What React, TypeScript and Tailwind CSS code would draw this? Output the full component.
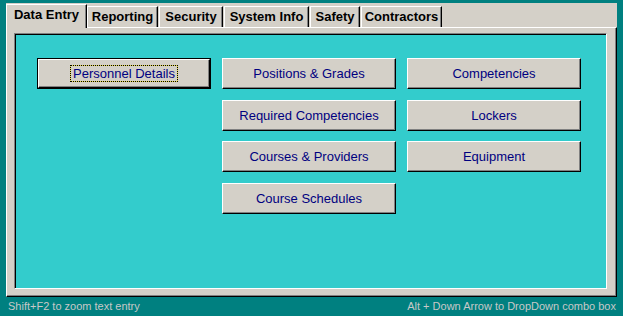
const tabs = [
  { label: "Data Entry", w: "w-[81px]", active: true },
  { label: "Reporting", w: "w-[71px]" },
  { label: "Security", w: "w-[64px]" },
  { label: "System Info", w: "w-[85px]" },
  { label: "Safety", w: "w-[50px]" },
  { label: "Contractors", w: "w-[81px]" },
];

// row-major, null = empty slot
const buttons: (string | null)[] = [
  "Personnel Details",
  "Positions & Grades",
  "Competencies",
  null,
  "Required Competencies",
  "Lockers",
  null,
  "Courses & Providers",
  "Equipment",
  null,
  "Course Schedules",
  null,
];

function Tab({ label, w, active }: { label: string; w: string; active?: boolean }) {
  if (active) {
    return (
      <div
        className={`${w} h-[24px] -mb-px z-10 relative bg-[#d4d0c8] border-t border-l border-white border-r border-r-black shadow-[inset_-1px_0_0_#808080] pt-[2px] text-center text-[13px] leading-[15px] font-bold text-black`}
      >
        {label}
      </div>
    );
  }
  return (
    <div
      className={`${w} h-[21px] mr-px bg-[#d4d0c8] border-t border-l border-white border-r border-r-black shadow-[inset_-1px_0_0_#808080] pt-[2px] text-center text-[13px] leading-[15px] font-bold text-black`}
    >
      {label}
    </div>
  );
}

function Button({ label }: { label: string }) {
  return (
    <div className="h-[31px] w-[174px] flex items-center justify-center bg-[#d4d0c8] border-t border-l border-white border-r border-b border-r-black border-b-black shadow-[inset_-1px_-1px_0_#808080] text-[13px] leading-[15px] text-[#000080]">
      {label}
    </div>
  );
}

function DefaultButton({ label }: { label: string }) {
  return (
    <div className="h-[31px] w-[174px] border border-black">
      <div className="h-full w-full flex items-center justify-center bg-[#d4d0c8] border-t border-l border-white border-r border-b border-r-black border-b-black shadow-[inset_-1px_-1px_0_#808080] text-[13px] leading-[15px] text-[#000080]">
        <span className="border border-dotted border-black bg-[#e6d84a]">
          <span className="block bg-[#d4d0c8] px-[2px] leading-[15px]">{label}</span>
        </span>
      </div>
    </div>
  );
}

export default function App() {
  return (
    <div className="w-[623px] h-[316px] bg-[#008080] pt-[3px] font-['Liberation_Sans',Arial,sans-serif] overflow-hidden">
      <div className="ml-[6px] w-[611px] h-[294px] bg-[#d4d0c8] flex flex-col">
        <div className="h-[24px] flex items-end">
          {tabs.map((t) => (
            <Tab key={t.label} {...t} />
          ))}
        </div>
        <div className="h-[270px] border-t border-l border-white border-r border-b border-r-black border-b-black shadow-[inset_-1px_-1px_0_#808080] pl-[7px] pt-[5px]">
          <div className="w-[593px] h-[256px] bg-[#33cccc] border-t border-l border-[#808080] border-r border-b border-r-white border-b-white shadow-[inset_1px_1px_0_#000] pl-[22px] pt-[24px]">
            <div className="grid grid-cols-[174px_174px_174px] gap-x-[11px] gap-y-[10.67px]">
              {buttons.map((b, i) =>
                b === null ? (
                  <div key={i} />
                ) : i === 0 ? (
                  <DefaultButton key={i} label={b} />
                ) : (
                  <Button key={i} label={b} />
                )
              )}
            </div>
          </div>
        </div>
      </div>
      <div className="mt-[3px] flex justify-between pl-[8px] pr-[7px] text-[11px] leading-[13px] text-[#c8c8c8]">
        <span>Shift+F2 to zoom text entry</span>
        <span>Alt + Down Arrow to DropDown combo box</span>
      </div>
    </div>
  );
}
